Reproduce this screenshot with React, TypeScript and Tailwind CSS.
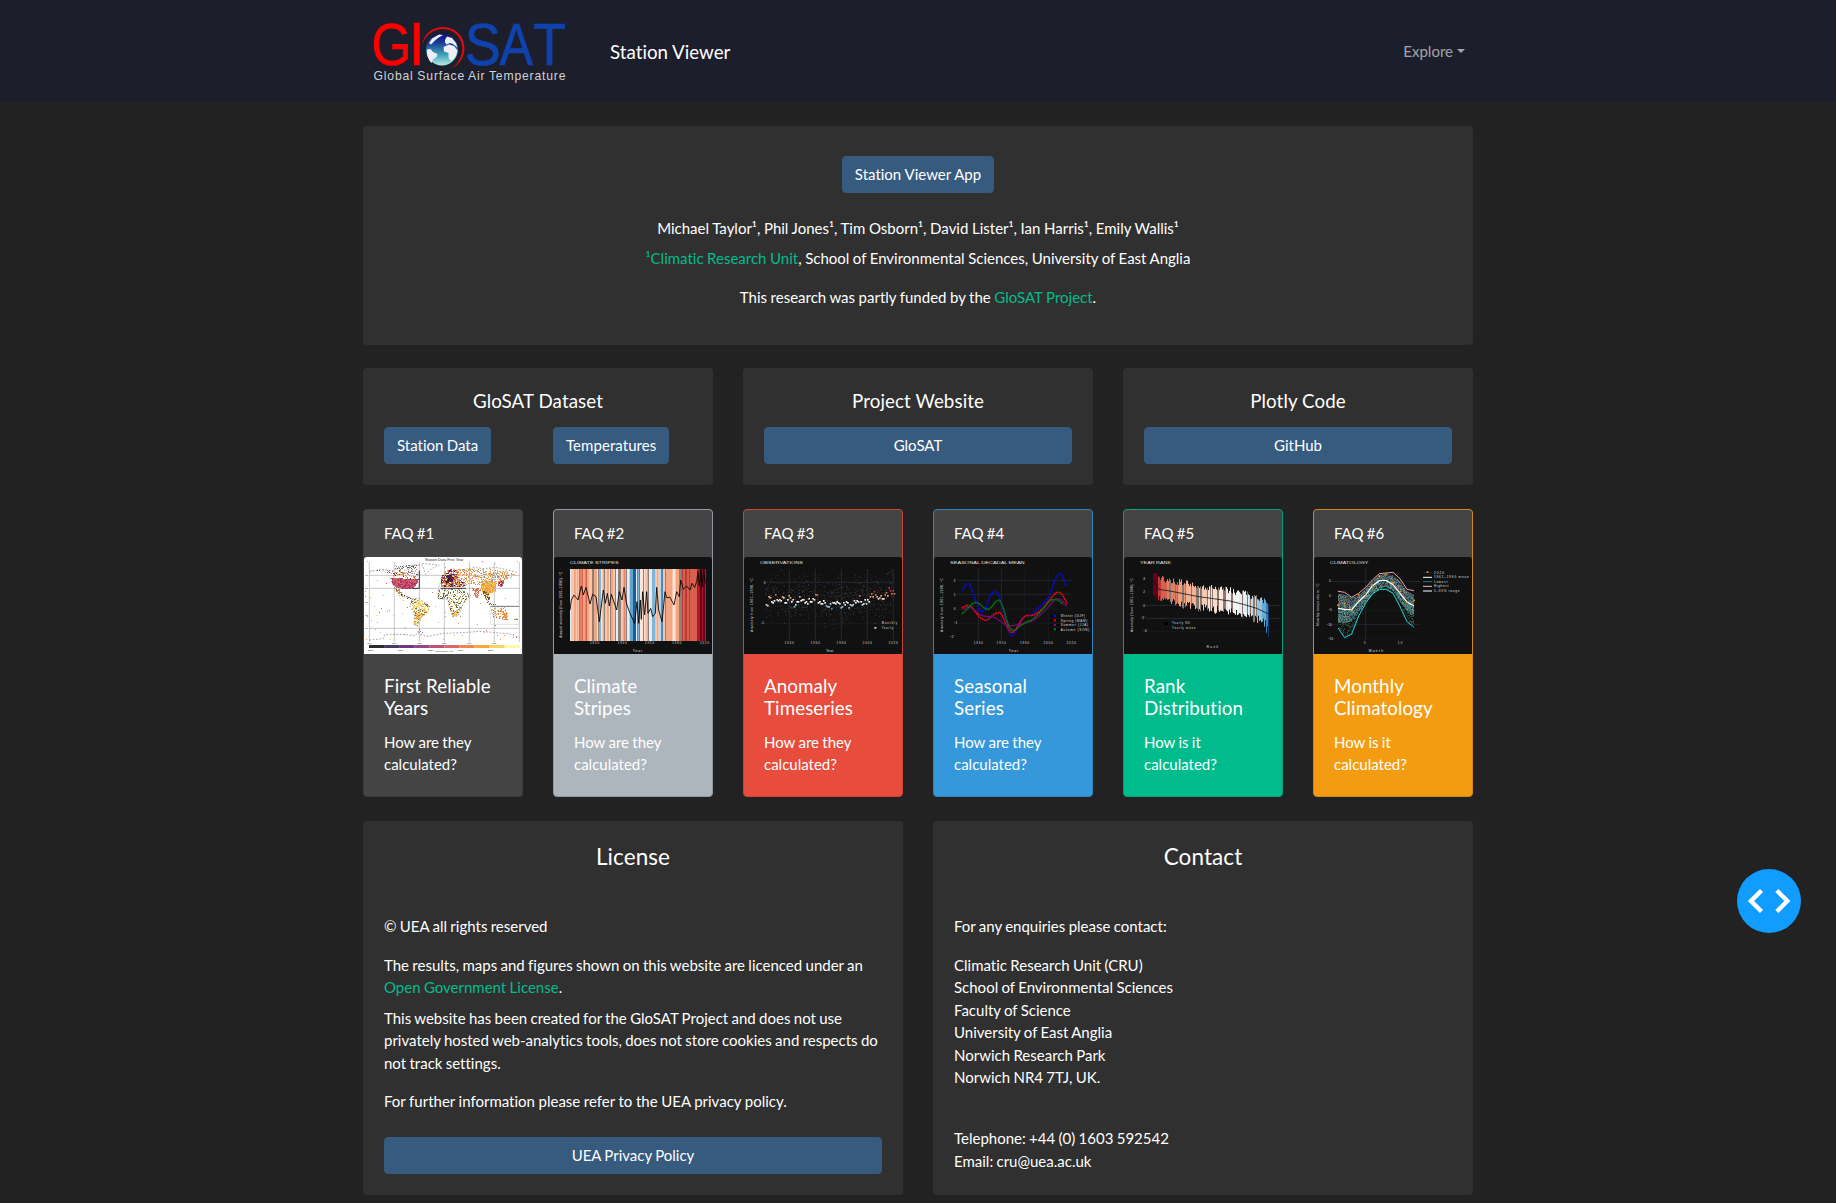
import type { ReactNode } from "react";

type Pt = [number, number];

function rng(seed: number) {
  let s = seed;
  return () => {
    s = (s + 0x6d2b79f5) | 0;
    let t = Math.imul(s ^ (s >>> 15), 1 | s);
    t = (t + Math.imul(t ^ (t >>> 7), 61 | t)) ^ t;
    return ((t ^ (t >>> 14)) >>> 0) / 4294967296;
  };
}

function inside(x: number, y: number, poly: Pt[]) {
  let hit = false;
  for (let i = 0, j = poly.length - 1; i < poly.length; j = i++) {
    const [xi, yi] = poly[i];
    const [xj, yj] = poly[j];
    if (yi > y !== yj > y && x < ((xj - xi) * (y - yi)) / (yj - yi) + xi) hit = !hit;
  }
  return hit;
}

function lerp(points: Pt[], x: number) {
  if (x <= points[0][0]) return points[0][1];
  for (let i = 1; i < points.length; i++) {
    if (x <= points[i][0]) {
      const [x0, y0] = points[i - 1];
      const [x1, y1] = points[i];
      return y0 + ((y1 - y0) * (x - x0)) / (x1 - x0);
    }
  }
  return points[points.length - 1][1];
}

const toPath = (pts: Pt[]) => "M" + pts.map((p) => p.join(" ")).join("L");

function Chart({ x, bg, children }: { x: number; bg: string; children: ReactNode }) {
  return (
    <svg viewBox={`${x} 171 474 291`} width="158" height="97" preserveAspectRatio="none" className="block rounded-t-[3px]" fontFamily="Liberation Sans, sans-serif">
      <rect x={x} y="171" width="474" height="291" fill={bg} />
      {children}
    </svg>
  );
}

/* World map of station start years */
const YEARS = ["#2b2b2b", "#463a63", "#6b3a80", "#94478a", "#bd5177", "#dc6468", "#f0824f", "#fbab35", "#f9d45c", "#fafaa8"];

type Region = { poly: Pt[]; density: number; colors: string[]; outline?: boolean };
const REGIONS: Region[] = [
  { poly: [[124, 234], [170, 236], [206, 238], [204, 246], [192, 264], [178, 268], [140, 264], [128, 254]], density: 1, colors: ["#bd4070", "#d05068", "#b03a66", "#dc6468", "#9c3068", "#d8606a"] },
  { poly: [[74, 212], [118, 220], [130, 236], [204, 238], [206, 222], [180, 218], [120, 208]], density: 0.34, colors: ["#f0824f", "#fbab35", "#dc6468", "#444444", "#f0a070"] },
  { poly: [[132, 196], [200, 194], [206, 220], [170, 224], [140, 214]], density: 0.34, colors: ["#555555", "#888888", "#bbbbaa"] },
  { poly: [[132, 262], [150, 268], [160, 284], [184, 294], [176, 300], [156, 290], [140, 276]], density: 0.55, colors: ["#f0824f", "#444444", "#c9a23a", "#888866"] },
  { poly: [[186, 296], [206, 296], [240, 318], [230, 340], [214, 352], [202, 378], [192, 374], [194, 340], [180, 318]], density: 0.55, colors: ["#f9d45c", "#fbab35", "#f5e08a", "#777755", "#f9d45c"], outline: true },
  { poly: [[194, 338], [220, 338], [214, 356], [196, 358]], density: 0.8, colors: ["#fbab35", "#f0824f"] },
  { poly: [[282, 216], [300, 208], [322, 210], [330, 240], [350, 252], [340, 262], [290, 262], [272, 262], [272, 236]], density: 0.85, colors: ["#6b2a50", "#3a2540", "#f0824f", "#bd5177", "#fbab35", "#c98a3a", "#e08a4a"] },
  { poly: [[290, 224], [308, 224], [310, 246], [290, 246]], density: 0.95, colors: ["#4a1a4a", "#6b1a4a", "#2b1b2b", "#8a2a5a"] },
  { poly: [[322, 208], [400, 206], [470, 214], [500, 226], [464, 240], [440, 246], [380, 256], [320, 258]], density: 0.42, colors: ["#fbab35", "#f0824f", "#dcae7a", "#f0b070", "#999988"] },
  { poly: [[396, 242], [440, 246], [438, 274], [412, 284], [392, 266]], density: 0.92, colors: ["#fbab35", "#f9c45c", "#f0a04f", "#e0983a"] },
  { poly: [[366, 264], [394, 266], [384, 296], [376, 292]], density: 0.65, colors: ["#dc6468", "#e58a70", "#f0824f"] },
  { poly: [[396, 270], [418, 282], [420, 306], [446, 316], [420, 316], [404, 298]], density: 0.55, colors: ["#7a6a2a", "#fbab35", "#555533"] },
  { poly: [[444, 246], [462, 240], [460, 258], [446, 262]], density: 0.7, colors: ["#dc6468", "#bd5177", "#444444"] },
  { poly: [[264, 270], [330, 266], [362, 286], [340, 310], [324, 348], [308, 350], [298, 320], [294, 298], [264, 296]], density: 0.38, colors: ["#6f6a3a", "#999977", "#e5cc60", "#666655", "#f0d48f"], outline: true },
  { poly: [[304, 334], [324, 330], [322, 348], [308, 350]], density: 0.75, colors: ["#f9d45c", "#fbab35"] },
  { poly: [[424, 330], [446, 320], [462, 320], [474, 346], [466, 360], [430, 350]], density: 0.26, colors: ["#fbab35", "#f0824f", "#c9a23a"], outline: true },
  { poly: [[456, 332], [472, 340], [470, 360], [454, 352]], density: 0.8, colors: ["#f0824f", "#dc6468", "#fbab35"] },
  { poly: [[490, 360], [506, 350], [500, 370]], density: 0.5, colors: ["#fbab35", "#777777"] },
  { poly: [[46, 182], [508, 182], [508, 424], [46, 424]], density: 0.006, colors: ["#f0a04f", "#dc6468", "#f9d45c", "#bbbbbb"] },
];

const mapCells = (() => {
  const r = rng(7);
  const out: Record<string, string> = {};
  for (const reg of REGIONS) {
    for (let x = 45; x < 513; x += 3)
      for (let y = 174; y < 426; y += 3)
        if (inside(x + 1.5, y + 1.5, reg.poly) && r() < reg.density) {
          const c = reg.colors[Math.floor(r() * reg.colors.length)];
          out[c] = (out[c] || "") + `M${x} ${y}h3v3h-3z`;
        }
  }
  return out;
})();

function MapChart() {
  return (
    <Chart x={42} bg="#ffffff">
      <g stroke="#000" strokeOpacity="0.28" strokeWidth="2.4">
        {[58, 133, 208, 283, 358, 433, 508].map((x) => <path key={x} d={`M${x} 186V426`} />)}
        <path d="M58 226H508M58 265H508M58 385H508" />
      </g>
      {Object.entries(mapCells).map(([c, d]) => <path key={c} d={d} fill={c} />)}
      <g fill="none" stroke="#666" strokeWidth="1.8" strokeDasharray="5 5">
        {REGIONS.filter((g) => g.outline).map((g, i) => <path key={i} d={toPath(g.poly) + "Z"} />)}
        <path d="M58 420L100 416L104 404L160 403L195 408L210 388L206 400L232 410L280 400L340 398L390 394L440 398L480 402L508 412" />
        <path d="M58 216L90 208L130 212L150 202L200 194L218 196L226 222L246 206L266 194M216 190L268 196M284 220L306 206L330 212L372 202L400 206L440 202L480 212L506 218" />
        <path d="M120 234L132 260L150 284L184 296M266 262L276 236L290 220" />
      </g>
      <g stroke="#111" strokeWidth="2.4" fill="none">
        <path d="M208 212V265H186M272 265H348" />
        <path d="M421 319H508" stroke="#555" />
        <path d="M421 319V373H508" stroke="#ccc" strokeWidth="1.5" />
      </g>
      {YEARS.map((c, i) => <rect key={c} x={57 + i * 45.2} y="435" width="45.3" height="9" fill={c} />)}
      <g fill="#222" fontSize="9">
        <text x="225" y="183" fontSize="11" textLength="115">Station Data First Year</text>
        <text x="254" y="457" fontSize="7" textLength="56">First reliable year</text>
        {[52, 127, 202, 277, 352, 427].map((x) => <text key={x} x={x} y="432" fontSize="7">180</text>)}
        {[54, 144, 234, 324, 414].map((x) => <text key={x} x={x} y="452" fontSize="7">1850</text>)}
        {[229, 268, 309, 349, 388].map((y) => <text key={y} x="46" y={y} fontSize="7">30</text>)}
      </g>
    </Chart>
  );
}

/* Climate stripes */
const STRIPE_LINE: Pt[] = [[660, 330], [664, 300], [672, 285], [684, 300], [694, 258], [700, 285], [708, 262], [720, 312], [728, 283], [738, 290], [748, 365], [760, 270], [766, 310], [772, 280], [778, 318], [784, 283], [800, 330], [808, 275], [816, 300], [822, 262], [830, 312], [840, 340], [854, 370], [861, 305], [866, 370], [871, 300], [874, 358], [878, 275], [884, 345], [890, 275], [894, 340], [902, 325], [908, 350], [916, 340], [920, 262], [926, 330], [936, 365], [945, 275], [950, 293], [960, 292], [972, 315], [980, 275], [988, 290], [992, 240], [1000, 268], [1010, 258], [1020, 270], [1026, 250], [1034, 262], [1040, 245], [1044, 215], [1048, 258], [1052, 208], [1056, 262], [1060, 208], [1066, 250]];
const stripes = (() => {
  const r = rng(21);
  const out: { x: number; c: string }[] = [];
  for (let x = 660; x < 1067; x += 3) {
    const y = lerp(STRIPE_LINE, x) + (r() - 0.5) * 20;
    let c = y < 232 ? "#8d0c25" : y < 246 ? "#b2182b" : y < 262 ? "#d6604d" : y < 276 ? "#e58368" : y < 294 ? "#f4a582" : y < 312 ? "#fbc5a9" : y < 322 ? "#fde4d6" : y < 332 ? "#e6eef3" : y < 345 ? "#b5d7e8" : y < 358 ? "#7db8d8" : "#3f87bd";
    if (x > 1040) c = r() < 0.6 ? "#67001f" : "#b2182b";
    else if (x > 990) c = r() < 0.6 ? "#d6604d" : "#b93b36";
    else if (x > 838 && x < 858) c = x > 848 ? "#1c5c9c" : "#5fa5cd";
    else if (r() < 0.2) c = "#8d8078";
    out.push({ x, c });
  }
  return out;
})();

function StripesChart() {
  return (
    <Chart x={612} bg="#111111">
      {stripes.map((s) => <rect key={s.x} x={s.x} y="207" width="3.1" height="216" fill={s.c} />)}
      <path d={toPath(STRIPE_LINE)} fill="none" stroke="#000" strokeWidth="2.6" strokeLinejoin="round" />
      <g fill="#e0e0e0">
        <text x="660" y="193" fontSize="11" textLength="146" lengthAdjust="spacingAndGlyphs">CLIMATE STRIPES</text>
        <text x="848" y="455" fontSize="10" textLength="28">Year</text>
        {[[720, "1850"], [803, "1900"], [885, "1950"], [967, "1980"], [1050, "2020"]].map(([x, t]) => <text key={x} x={x} y="431" fontSize="8" textLength="27">{t}</text>)}
        <text transform="translate(635 413) rotate(-90)" fontSize="10" textLength="198">Annual anomaly (from 1961–1990), °C</text>
      </g>
    </Chart>
  );
}

/* Monthly observations with yearly means */
const OBS_LINE: Pt[] = [[137, 305], [150, 296], [175, 288], [195, 296], [210, 298], [222, 312], [235, 292], [255, 298], [275, 300], [290, 290], [305, 305], [320, 330], [330, 318], [345, 312], [365, 312], [385, 310], [400, 306], [410, 292], [425, 300], [445, 296], [455, 282], [470, 286], [490, 284], [505, 272], [522, 270]];
const obs = (() => {
  const r = rng(5);
  let faint = "";
  let dim = "";
  for (let i = 0; i < 1150; i++) {
    const x = 135 + Math.floor((r() * 387) / 3) * 3;
    const g = r() + r() + r() - 1.5;
    const y = Math.round((lerp(OBS_LINE, x) - 6 + g * 70) / 3) * 3;
    if (y < 207 || y > 420) continue;
    if (r() < 0.5) faint += `M${x} ${y}h3v3h-3z`;
    else dim += `M${x} ${y}h3v3h-3z`;
  }
  const dots: { x: number; y: number; c: string }[] = [];
  for (let x = 137; x < 522; x += 4) {
    const y = lerp(OBS_LINE, x) + (r() - 0.5) * 24;
    const c = y < 276 ? "#c0394a" : y < 284 ? "#d6705d" : y < 291 ? "#f4a582" : y < 298 ? "#fde0cf" : y < 306 ? "#ffffff" : y < 313 ? "#d9eaf3" : y < 322 ? "#92c5de" : y < 330 ? "#4a90be" : "#24507a";
    dots.push({ x, y: Math.round(y / 3) * 3, c });
  }
  return { faint, dim, dots };
})();

const YAxis = ({ x, y0, len, children }: { x: number; y0: number; len: number; children: string }) => (
  <text transform={`translate(${x} ${y0}) rotate(-90)`} fontSize="10" fill="#ddd" textLength={len}>{children}</text>
);

function ObservationsChart() {
  return (
    <Chart x={72} bg="#111111">
      <g stroke="#222a35" strokeWidth="3">
        {[208, 286, 364, 442, 520].map((x) => <path key={x} d={`M${x} 207V422`} />)}
        <path d="M132 247H525" />
        <path d="M132 370H525" strokeWidth="1.2" />
      </g>
      <path d={obs.faint} fill="#1f1f1f" />
      <path d={obs.dim} fill="#2d2d2d" />
      {obs.dots.map((d) => <rect key={d.x} x={d.x} y={d.y} width="5" height="5" fill={d.c} />)}
      <g fill="#e0e0e0">
        <text x="120" y="193" fontSize="11" textLength="129" lengthAdjust="spacingAndGlyphs">OBSERVATIONS</text>
        <text x="318" y="455" fontSize="10" textLength="22">Year</text>
        {[[194, "1940"], [272, "1960"], [350, "1980"], [428, "2000"], [506, "2020"]].map(([x, t]) => <text key={x} x={x} y="431" fontSize="8" textLength="27">{t}</text>)}
        <text x="131" y="251" fontSize="9">5</text>
        <text x="122" y="373" fontSize="8">−5</text>
        <text x="485" y="373" fontSize="8" textLength="46">Monthly</text>
        <text x="485" y="387" fontSize="8" textLength="34">Yearly</text>
        <rect x="463" y="367" width="4" height="4" fill="#7a2233" />
        <rect x="463" y="381" width="6" height="5" fill="#d5e4ee" />
      </g>
      <YAxis x={98} y0={396} len={162}>Anomaly from 1961–1990, °C</YAxis>
    </Chart>
  );
}

/* Seasonal decadal means */
function SeasonalChart() {
  return (
    <Chart x={642} bg="#111111">
      <g stroke="#252b37" strokeWidth="2.5">
        <path d="M775 207V422M844 207V422M712 241H1054M712 283H1054" />
        <path d="M914 207V422M985 207V422M712 327H1054M712 370H1054" strokeWidth="1" />
      </g>
      <g fill="none" strokeWidth="5" strokeLinejoin="round">
        <path d="M728 273C733 255 740 249 745 251C756 258 768 312 778 330C785 340 793 335 800 318C808 290 816 273 826 274C838 278 850 330 858 362C864 392 870 408 877 409C886 405 892 380 904 358C914 344 926 346 938 342C956 322 976 306 987 290C1002 252 1009 221 1019 221C1028 222 1032 246 1039 256" stroke="#0808f0" strokeDasharray="6 3" />
        <path d="M725 325C736 315 748 313 756 322C768 340 784 362 799 361C812 356 824 335 840 338C852 346 860 396 878 398C890 392 906 346 922 346C942 352 968 330 982 308C998 290 1004 276 1018 277C1030 282 1034 300 1042 312" stroke="#f00808" strokeDasharray="6 2" />
        <path d="M730 330C744 314 756 320 768 334C782 350 800 350 816 350C836 354 848 376 868 378C896 374 924 370 942 360C964 346 984 322 1004 300C1020 290 1030 304 1040 320" stroke="#700a78" strokeWidth="4" />
        <path d="M726 341C740 334 752 308 768 307C782 310 792 328 804 328C818 324 826 298 838 301C850 314 856 350 864 372C870 388 876 392 884 392C900 376 916 366 932 362C952 350 968 326 984 308C1000 292 1016 298 1030 314" stroke="#0a780e" strokeDasharray="6 2" />
      </g>
      {[["#0808f0", "Winter (DJF)", 348, 73], ["#e80808", "Spring (MAM)", 361, 80], ["#800a80", "Summer (JJA)", 375, 82], ["#0a780e", "Autumn (SON)", 388, 86]].map(([c, t, y, w]) => (
        <g key={t}>
          <path d={`M990 ${y}H1020`} stroke="#000" strokeWidth="3" />
          <rect x="1001" y={Number(y) - 3} width="7" height="6" fill={String(c)} />
          <text x="1022" y={Number(y) + 4} fontSize="9" fill="#e0e0e0" textLength={w}>{t}</text>
        </g>
      ))}
      <g fill="#e0e0e0">
        <text x="690" y="193" fontSize="11" textLength="224" lengthAdjust="spacingAndGlyphs">SEASONAL DECADAL MEAN</text>
        <text x="866" y="455" fontSize="10" textLength="28">Year</text>
        {[[761, "1940"], [830, "1950"], [900, "1980"], [971, "2000"], [1040, "2020"]].map(([x, t]) => <text key={x} x={x} y="431" fontSize="8" textLength="27">{t}</text>)}
        {[[245, "2"], [287, "1"], [330, "0"], [373, "−1"]].map(([y, t]) => <text key={y} x="701" y={y} fontSize="9">{t}</text>)}
        <text x="690" y="414" fontSize="9">−2</text>
      </g>
      <YAxis x={668} y0={396} len={162}>Anomaly from 1961–1990, °C</YAxis>
    </Chart>
  );
}

/* Ranked yearly spread */
const RANK_MEAN: Pt[] = [[160, 240], [176, 268], [210, 273], [250, 281], [290, 289], [340, 296], [390, 303], [430, 313], [470, 325], [506, 342]];
const RANK_COLORS: [number, string][] = [[172, "#67001f"], [182, "#b93b36"], [200, "#d6604d"], [230, "#e07f62"], [256, "#ee9c7a"], [290, "#f4b295"], [322, "#f8c9b2"], [352, "#fbdccd"], [384, "#fbe8de"], [416, "#f4f4f4"], [446, "#e2edf3"], [470, "#c2dceb"], [486, "#92c5de"], [498, "#6aaad2"], [504, "#3a7fb8"], [520, "#0a3a70"]];
const rankBars = (() => {
  const r = rng(12);
  const out: { x: number; y: number; h: number; c: string }[] = [];
  for (let x = 159; x < 507; x += 3) {
    const m = lerp(RANK_MEAN, x);
    const top = x < 171 ? 219 : x > 501 ? 318 : m - 22 - r() * 20;
    const bottom = x < 171 ? 285 + r() * 10 : x > 501 ? 412 : m + 20 + r() * (x > 480 ? 44 : 26);
    const base = RANK_COLORS.find(([e]) => x < e)![1];
    out.push({ x, y: top, h: bottom - top, c: x > 171 && x < 480 && r() < 0.25 ? "#8a7a72" : base });
  }
  return out;
})();

function RankChart() {
  return (
    <Chart x={72} bg="#111111">
      <g stroke="#27303b" strokeWidth="2.5">
        <path d="M137 316H538M137 355H538" />
        <path d="M137 276H538M137 395H538M137 236H538" strokeWidth="0.7" />
      </g>
      {rankBars.map((b) => <rect key={b.x} x={b.x} y={b.y} width="3.1" height={b.h} fill={b.c} />)}
      <path d={toPath(RANK_MEAN)} stroke="#111" strokeWidth="2.4" fill="none" />
      <rect x="192" y="366" width="12" height="9" fill="#000" />
      <rect x="195" y="383" width="4" height="3" fill="#000" />
      <g fill="#e0e0e0">
        <text x="120" y="193" fontSize="11" textLength="93" lengthAdjust="spacingAndGlyphs">YEAR RANK</text>
        <text x="320" y="443" fontSize="9" textLength="34">Rank</text>
        <text x="216" y="373" fontSize="8" textLength="53">Yearly SD</text>
        <text x="216" y="387" fontSize="8" textLength="70">Yearly mean</text>
        {[[239, "4"], [279, "2"], [320, "0"], [397, "−4"]].map(([y, t]) => <text key={y} x="130" y={y} fontSize="9">{t}</text>)}
        <text x="122" y="358" fontSize="9">−2</text>
      </g>
      <YAxis x={98} y0={396} len={162}>Anomaly (from 1961–1990), °C</YAxis>
    </Chart>
  );
}

/* Monthly climatology */
const HIGH: Pt[] = [[714, 274], [734, 277], [755, 292], [776, 280], [797, 262], [817, 240], [838, 221], [858, 219], [879, 217], [900, 236], [921, 268], [942, 272]];
const UP: Pt[] = [[714, 281], [734, 284], [755, 293], [776, 288], [797, 266], [817, 244], [838, 225], [858, 222], [879, 226], [900, 244], [921, 274], [942, 284]];
const MID: Pt[] = [[714, 325], [734, 328], [755, 329], [776, 305], [797, 285], [817, 258], [838, 242], [858, 241], [879, 254], [900, 280], [921, 306], [942, 318]];
const DOWN: Pt[] = [[714, 366], [734, 369], [755, 364], [776, 336], [797, 306], [817, 282], [838, 264], [858, 260], [879, 272], [900, 304], [921, 334], [942, 350]];
const LOW: Pt[] = [[714, 384], [734, 413], [755, 402], [776, 348], [797, 310], [817, 282], [838, 268], [858, 268], [879, 280], [900, 320], [921, 365], [942, 382]];
const speckle = (() => {
  const r = rng(33);
  const tones = ["#3f5f66", "#2c3c4c", "#8a8c88", "#5d7a72", "#26303a", "#256a66"];
  const out: Record<string, string> = {};
  for (let x = 714; x < 942; x += 3)
    for (let y = 216; y < 414; y += 3) {
      if (y < lerp(UP, x) || y > lerp(LOW, x)) continue;
      const low = y > lerp(DOWN, x);
      if (r() > (low ? 0.35 : 0.6)) continue;
      const c = low ? "#28463a" : tones[Math.floor(r() * tones.length)];
      out[c] = (out[c] || "") + `M${x} ${y}h3v3h-3z`;
    }
  return out;
})();

function ClimatologyChart() {
  return (
    <Chart x={642} bg="#111111">
      <g stroke="#222c38" strokeWidth="2.5">
        <path d="M797 207V422M694 244H960M694 373H960" />
        <path d="M694 287H960M694 331H960M694 416H960" strokeWidth="0.8" />
      </g>
      <path d={toPath([...UP, ...[...DOWN].reverse()]) + "Z"} fill="#5d6866" />
      <path d={toPath([...MID, ...[...DOWN].reverse()]) + "Z"} fill="#3f7f78" fillOpacity="0.7" />
      {Object.entries(speckle).map(([c, d]) => <path key={c} d={d} fill={c} />)}
      <g fill="none" strokeWidth="2.8">
        <path d={toPath(HIGH)} stroke="#f5b3bf" />
        <path d={toPath(MID)} stroke="#fff" strokeWidth="3.6" />
        <path d={toPath(LOW)} stroke="#14e6e6" />
      </g>
      {([[714, 316], [734, 311], [755, 330], [776, 284], [797, 284], [817, 256], [838, 229], [858, 223], [879, 249], [900, 275], [921, 306], [942, 301]] as Pt[]).map(([x, y]) => <rect key={x} x={x - 2.5} y={y - 2.5} width="5" height="5" fill="#ffa500" />)}
      <g strokeWidth="3">
        <path d="M969 217H996" stroke="#22264a" />
        <rect x="980" y="214" width="5" height="5" fill="#ffa500" />
        <path d="M969 232H996" stroke="#fff" />
        <path d="M969 245H996" stroke="#178080" />
        <path d="M969 259H996" stroke="#f5b3bf" />
        <path d="M969 273H996" stroke="#888" strokeWidth="6" />
      </g>
      <g fill="#e0e0e0" fontSize="9">
        <text x="1002" y="221" textLength="30">2020</text>
        <text x="1002" y="235" textLength="104">1961–1990 mean</text>
        <text x="1002" y="248" textLength="40">Lowest</text>
        <text x="1002" y="262" textLength="43">Highest</text>
        <text x="1002" y="276" textLength="76">5–95% range</text>
        <text x="690" y="193" fontSize="11" textLength="115" lengthAdjust="spacingAndGlyphs">CLIMATOLOGY</text>
        <text x="806" y="455" fontSize="10" textLength="43">Month</text>
        <text x="792" y="431" fontSize="8">5</text>
        <text x="893" y="431" fontSize="8" textLength="14">10</text>
        <text x="687" y="247">5</text>
        <text x="687" y="290">0</text>
        <text x="685" y="334">−5</text>
        <text x="680" y="377">−10</text>
        <text x="684" y="420">−15</text>
      </g>
      <YAxis x={656} y0={378} len={128}>Monthly temperature, °C</YAxis>
    </Chart>
  );
}

function Logo() {
  return (
    <svg width="194" height="101" viewBox="372 0 194 101" className="block overflow-visible" fontFamily="Liberation Sans, sans-serif">
      <defs>
        <linearGradient id="ocean" x1="0" y1="0" x2="0" y2="1">
          <stop offset="0" stopColor="#0c0c80" />
          <stop offset="0.3" stopColor="#1c3f96" />
          <stop offset="0.65" stopColor="#3b9fb4" />
          <stop offset="1" stopColor="#b8ece6" />
        </linearGradient>
      </defs>
      <g fontSize="60" strokeWidth="0.7">
        <g fill="#ff0000" stroke="#ff0000">
          <text x="371.5" y="65.2" textLength="40" lengthAdjust="spacingAndGlyphs">G</text>
          <text x="410.2" y="65.2" fontSize="57" textLength="13" lengthAdjust="spacingAndGlyphs">l</text>
        </g>
        <g fill="#0f42ad" stroke="#0f42ad">
          <text x="464.7" y="65.2" textLength="36" lengthAdjust="spacingAndGlyphs">S</text>
          <text x="499.5" y="65.2" textLength="33.5" lengthAdjust="spacingAndGlyphs">A</text>
          <text x="533" y="65.2" textLength="33" lengthAdjust="spacingAndGlyphs">T</text>
        </g>
      </g>
      <path d="M422 45C424 33 433 27 443 27C456 27 464.5 37 464.5 48C464.5 57 459.5 64 452 68.5C458.5 62.5 462.5 56 462.3 48C462 37 454 29.2 443 29C434 29 426 34 422 45Z" fill="#e00b10" />
      <circle cx="442" cy="49.5" r="16" fill="url(#ocean)" />
      <path d="M427 49.5L430.5 49L433 52L437.5 54L436.5 57L433 59.5L431.5 63C428.5 60 426.5 55 427 49.5ZM443.5 47L449 44.5L454 46L457.5 50.5C457 55 454.5 59.5 451 61L448.5 57.5L448.5 53L444 51.5ZM429 43L432 38.5L439 34.5L443 35L438 38L434.5 41L431 44.5ZM445 40L447 36.5L452 38L456 43L457.5 47.5L453 44L450 43L446.5 44.5L445 42.5Z" fill="#eceef8" />
      <text x="373.5" y="79.8" fontSize="12.2" fill="#d0d2d8" textLength="192" lengthAdjust="spacing">Global Surface Air Temperature</text>
    </svg>
  );
}

const BTN = "inline-block rounded-[4px] border border-[#375a7f] bg-[#375a7f] px-3 py-[6px] text-center leading-[22.5px]";
const PANEL = "rounded-[4px] bg-[#303030]";
const LINK = "text-[#00bc8c]";
const H5 = "text-[18.75px] leading-[22.5px] tracking-[0.08px] [word-spacing:0px]";
const H4 = "text-center text-[22.5px] leading-[27px] tracking-[0.08px]";

const FAQS = [
  { title: ["First Reliable", "Years"], q: "How are they", cls: "border-[#3d3d3d] bg-[#444444]", chart: <MapChart /> },
  { title: ["Climate", "Stripes"], q: "How are they", cls: "border-[#8f99a4] bg-[#adb5bd]", chart: <StripesChart /> },
  { title: ["Anomaly", "Timeseries"], q: "How are they", cls: "border-[#cb4436] bg-[#e74c3c]", chart: <ObservationsChart /> },
  { title: ["Seasonal", "Series"], q: "How are they", cls: "border-[#3083be] bg-[#3498db]", chart: <SeasonalChart /> },
  { title: ["Rank", "Distribution"], q: "How is it", cls: "border-[#069f79] bg-[#00bc8c]", chart: <RankChart /> },
  { title: ["Monthly", "Climatology"], q: "How is it", cls: "border-[#d08812] bg-[#f39c12]", chart: <ClimatologyChart /> },
];

export default function App() {
  return (
    <div className="h-[1203px] w-full overflow-hidden bg-[#222222] font-['Lato',sans-serif] text-[15px] leading-[22.5px] text-white [font-variant-ligatures:none] [word-spacing:-0.5px]">
      <nav className="h-[101.5px] bg-[#1c1e2b]">
        <div className="mx-auto flex h-full w-[1110px] items-center">
          <div className="ml-[9px] self-start"><Logo /></div>
          <div className="ml-[44px] mt-[2px] text-[18.75px] leading-7 [word-spacing:0px]">Station Viewer</div>
          <div className="ml-auto mr-2 flex items-center text-white/60">
            Explore
            <span className="ml-[4px] border-x-[4.5px] border-t-[4.5px] border-x-transparent border-t-white/60" />
          </div>
        </div>
      </nav>

      <main className="mx-auto w-[1110px] pt-[24.5px]">
        <section className={`${PANEL} flex h-[219px] flex-col items-center pt-[30px]`}>
          <a className={`${BTN} [word-spacing:0px]`}>Station Viewer App</a>
          <p className="mt-[24.5px] [word-spacing:-0.2px]">Michael Taylor¹, Phil Jones¹, Tim Osborn¹, David Lister¹, Ian Harris¹, Emily Wallis¹</p>
          <p className="mt-[7.5px] [word-spacing:-0.3px]"><a className={LINK}>¹Climatic Research Unit</a>, School of Environmental Sciences, University of East Anglia</p>
          <p className="mt-4 [word-spacing:-0.3px]">This research was partly funded by the <a className={LINK}>GloSAT Project</a>.</p>
        </section>

        <section className="mt-[23px] grid grid-cols-3 gap-[30px]">
          <div className={`${PANEL} h-[117px] px-[21px] pt-[22px]`}>
            <h5 className={`${H5} text-center`}>GloSAT Dataset</h5>
            <div className="mt-[14.5px] grid grid-cols-2 gap-[30px]">
              <div><a className={BTN}>Station Data</a></div>
              <div><a className={`${BTN} tracking-[0.06px]`}>Temperatures</a></div>
            </div>
          </div>
          <div className={`${PANEL} h-[117px] px-[21px] pt-[22px]`}>
            <h5 className={`${H5} text-center`}>Project Website</h5>
            <a className={`${BTN} mt-[14.5px] w-full`}>GloSAT</a>
          </div>
          <div className={`${PANEL} h-[117px] px-[21px] pt-[22px]`}>
            <h5 className={`${H5} text-center`}>Plotly Code</h5>
            <a className={`${BTN} mt-[14.5px] w-full`}>GitHub</a>
          </div>
        </section>

        <section className="mt-6 grid grid-cols-6 gap-[30px]">
          {FAQS.map((f, i) => (
            <div key={i} className={`h-[288px] overflow-hidden rounded-[4px] border ${f.cls}`}>
              <div className="h-[47px] bg-[#444444] px-5 pt-3">FAQ #{i + 1}</div>
              <div className="bg-[#444444]">{f.chart}</div>
              <div className="px-5 pt-[20.5px]">
                <h5 className={H5}>{f.title[0]}<br />{f.title[1]}</h5>
                <p className="mt-[11px]">{f.q}<br />calculated?</p>
              </div>
            </div>
          ))}
        </section>

        <section className="mt-6 grid grid-cols-2 gap-[30px]">
          <div className={`${PANEL} h-[374px] px-[21px] pt-[22px]`}>
            <h4 className={H4}>License</h4>
            <p className="mt-[44.5px]">© UEA all rights reserved</p>
            <p className="mt-[16.5px]">The results, maps and figures shown on this website are licenced under an <a className={LINK}>Open Government License</a>.</p>
            <p className="mt-2">This website has been created for the GloSAT Project and does not use privately hosted web-analytics tools, does not store cookies and respects do not track settings.</p>
            <p className="mt-[15.5px] [word-spacing:-0.25px]">For further information please refer to the UEA privacy policy.</p>
            <a className={`${BTN} mt-[25px] w-full`}>UEA Privacy Policy</a>
          </div>
          <div className={`${PANEL} h-[374px] px-[21px] pt-[22px]`}>
            <h4 className={H4}>Contact</h4>
            <p className="mt-[44.5px]">For any enquiries please contact:</p>
            <p className="mt-[16.5px]">
              Climatic Research Unit (CRU)<br />
              School of Environmental Sciences<br />
              Faculty of Science<br />
              University of East Anglia<br />
              Norwich Research Park<br />
              Norwich NR4 7TJ, UK.
            </p>
            <p className="mt-[38.5px]">Telephone: +44 (0) 1603 592542<br />Email: cru@uea.ac.uk</p>
          </div>
        </section>
      </main>

      <button className="fixed left-[1737px] top-[869px] size-16 rounded-full bg-[#119dff]" aria-label="Developer tools">
        <svg viewBox="0 0 64 64" className="size-16" fill="none" stroke="#fff" strokeWidth="4.4">
          <path d="M24.5 21.5L14 32L24.5 42.5M39.8 21.5L50.3 32L39.8 42.5" />
        </svg>
      </button>
    </div>
  );
}
